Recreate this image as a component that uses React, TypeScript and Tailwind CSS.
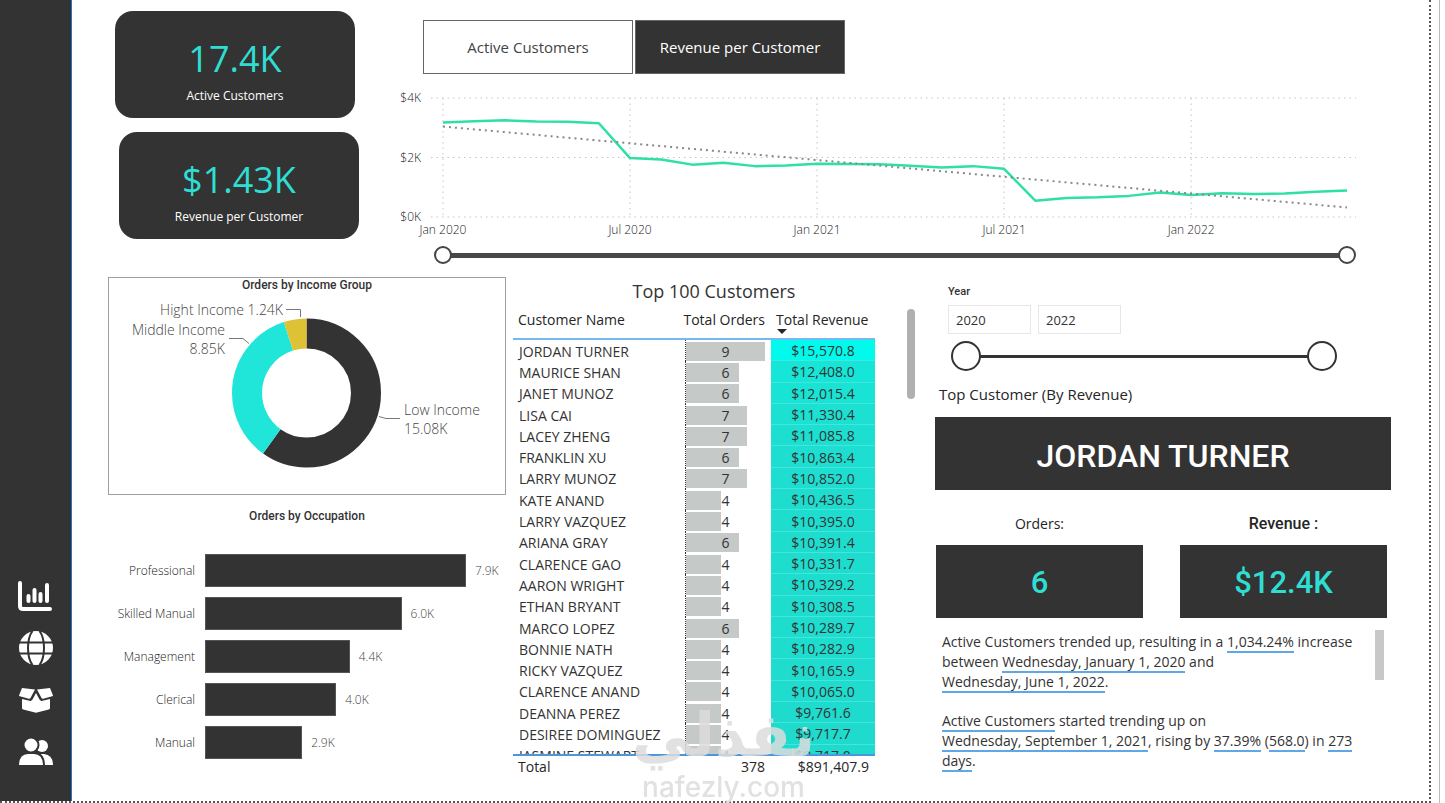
import React, { useState } from 'react';
import clsx from 'clsx';

interface Customer {
  name: string;
  orders: number;
  revenue: string;
  fill: string;
}

const CUSTOMERS: Customer[] = [
  { name: 'JORDAN TURNER', orders: 9, revenue: '$15,570.8', fill: 'bg-[#00fbec]' },
  { name: 'MAURICE SHAN', orders: 6, revenue: '$12,408.0', fill: 'bg-[#16e6d8]' },
  { name: 'JANET MUNOZ', orders: 6, revenue: '$12,015.4', fill: 'bg-[#18e3d5]' },
  { name: 'LISA CAI', orders: 7, revenue: '$11,330.4', fill: 'bg-[#1be0d2]' },
  { name: 'LACEY ZHENG', orders: 7, revenue: '$11,085.8', fill: 'bg-[#1cdfd1]' },
  { name: 'FRANKLIN XU', orders: 6, revenue: '$10,863.4', fill: 'bg-[#1dded0]' },
  { name: 'LARRY MUNOZ', orders: 7, revenue: '$10,852.0', fill: 'bg-[#1dded0]' },
  { name: 'KATE ANAND', orders: 4, revenue: '$10,436.5', fill: 'bg-[#1eddcf]' },
  { name: 'LARRY VAZQUEZ', orders: 4, revenue: '$10,395.0', fill: 'bg-[#1eddcf]' },
  { name: 'ARIANA GRAY', orders: 6, revenue: '$10,391.4', fill: 'bg-[#1eddcf]' },
  { name: 'CLARENCE GAO', orders: 4, revenue: '$10,331.7', fill: 'bg-[#1eddcf]' },
  { name: 'AARON WRIGHT', orders: 4, revenue: '$10,329.2', fill: 'bg-[#1eddcf]' },
  { name: 'ETHAN BRYANT', orders: 4, revenue: '$10,308.5', fill: 'bg-[#1eddcf]' },
  { name: 'MARCO LOPEZ', orders: 6, revenue: '$10,289.7', fill: 'bg-[#1eddcf]' },
  { name: 'BONNIE NATH', orders: 4, revenue: '$10,282.9', fill: 'bg-[#1eddcf]' },
  { name: 'RICKY VAZQUEZ', orders: 4, revenue: '$10,165.9', fill: 'bg-[#1fdccf]' },
  { name: 'CLARENCE ANAND', orders: 4, revenue: '$10,065.0', fill: 'bg-[#1fdccf]' },
  { name: 'DEANNA PEREZ', orders: 4, revenue: '$9,761.6', fill: 'bg-[#1fdbce]' },
  { name: 'DESIREE DOMINGUEZ', orders: 4, revenue: '$9,717.7', fill: 'bg-[#1fdbce]' },
  { name: 'JASMINE STEWART', orders: 4, revenue: '$9,717.0', fill: 'bg-[#1fdbce]' }
];

const MAX_ORDERS = 9;

const OCCUPATIONS = [
  { label: 'Professional', value: 7.9 },
  { label: 'Skilled Manual', value: 5.95 },
  { label: 'Management', value: 4.38 },
  { label: 'Clerical', value: 3.97 },
  { label: 'Manual', value: 2.94 }
];

const OCCUPATION_TEXT = ['7.9K', '6.0K', '4.4K', '4.0K', '2.9K'];

// Revenue per customer by month, in thousands
const REVENUE = [
  3.18, 3.22, 3.25, 3.21, 3.2, 3.15, 1.98, 1.93, 1.76, 1.82, 1.71, 1.73, 1.79, 1.78, 1.77,
  1.72, 1.66, 1.71, 1.62, 0.55, 0.64, 0.66, 0.71, 0.82, 0.74, 0.8, 0.77, 0.79, 0.85, 0.89
];

const INCOME = [
  { label: 'Low Income', value: 15.08, color: '#333333' },
  { label: 'Middle Income', value: 8.85, color: '#20e6da' },
  { label: 'Hight Income', value: 1.24, color: '#dfc135' }
];

/* Sidebar icons */

const ChartIcon = () => (
  <svg viewBox="0 0 36 32" className="h-8 w-9" fill="none" stroke="#fff" strokeLinecap="round">
    <path d="M2 3V26Q2 29 5 29H32" strokeWidth="4" strokeLinejoin="round" />
    <path d="M10.500 16V21M16.500 10V21M22.500 14V21M29 5V21" strokeWidth="4" />
  </svg>
);

const GlobeIcon = () => (
  <svg viewBox="0 0 34 34" className="size-[34px]">
    <circle cx="17" cy="17" r="17" fill="#fff" />
    <g fill="none" stroke="#333" strokeWidth="2">
      <path d="M0 11.500H34M0 22.500H34" />
      <path d="M13.500 0C7.500 8 7.500 26 13.500 34M20.500 0C26.500 8 26.500 26 20.500 34" />
    </g>
  </svg>
);

const BoxIcon = () => (
  <svg viewBox="0 0 34 26" className="h-[26px] w-[34px]" fill="#fff">
    <path d="M3 1L16 2.500L11.500 11Q11 12 9.800 11.700L.8 9.300Q-.3 9 .2 7.900Z" />
    <path d="M31 1L18 2.500L22.500 11Q23 12 24.200 11.700L33.200 9.300Q34.300 9 33.800 7.900Z" />
    <path d="M3 12L10.500 13.800Q12.500 14.200 13.500 12.500L17 6L20.500 12.500Q21.500 14.200 23.500 13.800L31 12V21Q31 22.300 29.800 22.600L18 25.600Q17 25.900 16 25.600L4.200 22.600Q3 22.300 3 21Z" />
  </svg>
);

const UsersIcon = () => (
  <svg viewBox="0 0 34 28" className="h-7 w-[34px]" fill="#fff">
    <circle cx="23" cy="8" r="6" />
    <path d="M20 16H25Q34 17 34 27H20Z" />
    <g stroke="#333" strokeWidth="2">
      <circle cx="12" cy="7" r="7.500" />
      <path d="M-1 28Q-1 15 9 15H15Q25 15 25 28Z" />
    </g>
  </svg>
);

const NAV = [
  { label: 'Overview', Icon: ChartIcon },
  { label: 'Map', Icon: GlobeIcon },
  { label: 'Products', Icon: BoxIcon },
  { label: 'Customers', Icon: UsersIcon }
];

const Sidebar = () => (
  <nav className="flex w-[72px] shrink-0 flex-col items-center justify-end gap-[18px] border-r border-[#2f6fc4] bg-[#333] pb-8">
    {NAV.map(({ label, Icon }) => (
      <a key={label} href={`#${label.toLowerCase()}`} aria-label={label} className="flex h-[34px] items-center">
        <Icon />
      </a>
    ))}
  </nav>
);

/* Range with two handles; the inputs share one track */

interface RangeProps {
  min: number;
  max: number;
  label: string;
  large?: boolean;
}

const Range: React.FC<RangeProps> = ({ min, max, label, large = false }) => {
  const [low, setLow] = useState(min);
  const [high, setHigh] = useState(max);

  const inputClass = clsx(
    'pointer-events-none absolute inset-0 h-full w-full appearance-none bg-transparent',
    '[&::-webkit-slider-thumb]:pointer-events-auto [&::-webkit-slider-thumb]:appearance-none [&::-webkit-slider-thumb]:rounded-full [&::-webkit-slider-thumb]:bg-white',
    large
      ? '[&::-webkit-slider-thumb]:size-[30px] [&::-webkit-slider-thumb]:border-2 [&::-webkit-slider-thumb]:border-[#333]'
      : '[&::-webkit-slider-thumb]:size-[18px] [&::-webkit-slider-thumb]:border-2 [&::-webkit-slider-thumb]:border-[#444]'
  );

  return (
    <div className={clsx('relative flex items-center', large ? 'h-[30px] px-4' : 'h-[18px] px-2')}>
      <div className={clsx('w-full', large ? 'h-[3px] bg-[#333]' : 'h-[5px] bg-[#484848]')} />
      <input
        type="range"
        aria-label={`${label} from`}
        min={min}
        max={max}
        value={low}
        onChange={(e) => setLow(Math.min(Number(e.target.value), high))}
        className={inputClass}
      />
      <input
        type="range"
        aria-label={`${label} to`}
        min={min}
        max={max}
        value={high}
        onChange={(e) => setHigh(Math.max(Number(e.target.value), low))}
        className={inputClass}
      />
    </div>
  );
};

const Kpi: React.FC<{ value: string; label: string; className?: string }> = ({ value, label, className }) => (
  <div
    className={clsx(
      'flex h-[107px] w-60 flex-col items-center rounded-[18px] bg-[#333] pt-6',
      className
    )}
  >
    <span className="text-4xl leading-[48px] text-[#2fded2]">{value}</span>
    <span className="text-xs leading-[26px] text-white">{label}</span>
  </div>
);

/* Line chart */

const LEFT = 43;
const RIGHT = 947;
const BASE = 131;
const toX = (i: number) => LEFT + (i * (RIGHT - LEFT)) / (REVENUE.length - 1);
const toY = (k: number) => BASE - k * 29.75;

const TrendChart = () => {
  const points = REVENUE.map((k, i) => `${toX(i)},${toY(k)}`).join(' ');

  return (
    <svg viewBox="0 0 956 153" className="h-auto w-full" role="img" aria-label="Revenue per customer by month">
      <g stroke="#c4c4c4" strokeWidth="1" strokeDasharray="1.500 4">
        {[0, 2, 4].map((k) => (
          <line key={k} x1="31" x2="956" y1={toY(k)} y2={toY(k)} />
        ))}
        {[0, 6, 12, 18, 24].map((i) => (
          <line key={i} x1={toX(i)} x2={toX(i)} y1="12" y2={BASE} />
        ))}
      </g>
      <g fontSize="12" fontWeight="300" fill="#222">
        {[4, 2, 0].map((k) => (
          <text key={k} x="21" y={toY(k) + 4} textAnchor="end">{`$${k}K`}</text>
        ))}
        {['Jan 2020', 'Jul 2020', 'Jan 2021', 'Jul 2021', 'Jan 2022'].map((label, i) => (
          <text key={label} x={toX(i * 6)} y="148" textAnchor="middle">
            {label}
          </text>
        ))}
      </g>
      <polyline points={points} fill="none" stroke="#2fe0a5" strokeWidth="2.500" strokeLinejoin="round" />
      <line
        x1={toX(0)}
        y1={toY(3.04)}
        x2={RIGHT}
        y2={toY(0.32)}
        stroke="#888"
        strokeWidth="2"
        strokeDasharray="2 4"
      />
    </svg>
  );
};

/* Donut */

const IncomeChart = () => {
  const total = INCOME.reduce((sum, d) => sum + d.value, 0);
  let start = 0;

  return (
    <svg viewBox="0 0 396 200" className="h-auto w-full" role="img" aria-label="Orders by income group">
      <g transform="rotate(-90 197.500 100)" fill="none" strokeWidth="30">
        {INCOME.map((d) => {
          const share = (d.value / total) * 100;
          const offset = -start;
          start += share;
          return (
            <circle
              key={d.label}
              cx="197.500"
              cy="100"
              r="59.500"
              stroke={d.color}
              pathLength="100"
              strokeDasharray={`${share} ${100 - share}`}
              strokeDashoffset={offset}
            />
          );
        })}
      </g>
      <g fill="none" stroke="#777" strokeWidth="1">
        <path d="M177 16.500H191.500V24" />
        <path d="M120 45.500H134L140 50.500" />
        <path d="M270 123.500L277 125.500H291" />
      </g>
      <g fontSize="14" fontWeight="300" fill="#444">
        <text x="174" y="22" textAnchor="end">Hight Income 1.24K</text>
        <text x="116" y="42" textAnchor="end">Middle Income</text>
        <text x="116" y="61" textAnchor="end">8.85K</text>
        <text x="295" y="122">Low Income</text>
        <text x="295" y="141">15.08K</text>
      </g>
    </svg>
  );
};

const OccupationChart = () => (
  <div className="flex flex-col gap-[10px]">
    {OCCUPATIONS.map(({ label, value }, i) => (
      <div key={label} className="flex h-[33px] items-center gap-[10px]">
        <span className="w-[87px] shrink-0 text-right text-xs font-light whitespace-nowrap text-[#222]">{label}</span>
        <div className="flex h-full flex-1 items-center gap-[9px] pr-10">
          <div
            className="h-full shrink-0 border border-[#555] bg-[#333]"
            style={{ width: `${(value / OCCUPATIONS[0].value) * 100}%` }}
          />
          <span className="text-xs font-light text-[#444]">{OCCUPATION_TEXT[i]}</span>
        </div>
      </div>
    ))}
  </div>
);

const CustomerTable = () => (
  <div className="flex items-start justify-between">
    <div className="h-[469px] w-[362px] overflow-y-auto [scrollbar-width:none]">
      <table className="h-[481px] w-full table-fixed border-separate border-spacing-0 text-sm leading-5 text-[#333]">
        <colgroup>
          <col className="w-[172px]" />
          <col className="w-[86px]" />
          <col className="w-[104px]" />
        </colgroup>
        <thead className="sticky top-0 z-10 bg-white text-[#252525]">
          <tr className="h-[31px]">
            <th className="border-b-2 border-[#76b9ee] pt-px pl-[5px] text-left align-top font-normal">Customer Name</th>
            <th className="border-b-2 border-[#76b9ee] pt-px pr-[6px] align-top font-normal">
              <span className="flex justify-end whitespace-nowrap">Total Orders</span>
            </th>
            <th
              className="relative border-b-2 border-[#76b9ee] pt-px pl-[5px] text-left align-top font-normal whitespace-nowrap"
              aria-sort="descending"
            >
              Total Revenue
              <svg viewBox="0 0 10 5" className="absolute top-5 left-[6px] h-[5px] w-[10px]" fill="#252525">
                <path d="M0 0H10L5 5Z" />
              </svg>
            </th>
          </tr>
        </thead>
        <tbody className="leading-[19px]">
          {CUSTOMERS.map((customer) => (
            <tr key={customer.name} className="h-[21px]">
              <td className="p-0 pt-px pl-[6px] whitespace-nowrap">{customer.name}</td>
              <td className="border-l border-dotted border-[#333] p-0 pt-px pr-[6px]">
                <div className="grid items-center text-center">
                  <div
                    className="col-start-1 row-start-1 h-[19px] bg-[#c5c9c8]"
                    style={{ width: `${(customer.orders / MAX_ORDERS) * 100}%` }}
                  />
                  <span className="col-start-1 row-start-1">{customer.orders}</span>
                </div>
              </td>
              <td className={clsx('border-b border-[#42e6db] p-0 pt-px text-center', customer.fill)}>
                {customer.revenue}
              </td>
            </tr>
          ))}
        </tbody>
        <tfoot className="sticky bottom-0 z-10 bg-white text-[#252525]">
          <tr className="h-6">
            <td className="border-t-2 border-[#4a97dc] p-0 pl-[5px]">Total</td>
            <td className="border-t-2 border-[#4a97dc] p-0 pr-[6px] text-right">378</td>
            <td className="border-t-2 border-[#4a97dc] p-0 pr-[6px] text-right">$891,407.9</td>
          </tr>
        </tfoot>
      </table>
    </div>
    <div className="h-[90px] w-2 rounded-full bg-[#b0b0b0]" />
  </div>
);

const Link: React.FC<{ children: React.ReactNode }> = ({ children }) => (
  <a href="#details" className="border-b-2 border-[#5fa8e8] whitespace-nowrap">
    {children}
  </a>
);

const TopCustomer = () => (
  <section className="flex min-w-0 flex-1 flex-col">
    <fieldset className="pr-[54px] pl-[13px]">
      <legend className="pt-[7px] font-[Roboto] text-[11px] leading-4 font-medium text-[#333]">Year</legend>
      <div className="mt-[5px] flex gap-[7px]">
        <input
          aria-label="First year"
          defaultValue="2020"
          className="h-[29px] w-[83px] border border-[#e6e6e6] px-[7px] text-[13px] text-[#333] outline-none"
        />
        <input
          aria-label="Last year"
          defaultValue="2022"
          className="h-[29px] w-[83px] border border-[#e6e6e6] px-[7px] text-[13px] text-[#333] outline-none"
        />
      </div>
      <div className="mt-[7px] ml-[3px]">
        <Range min={2020} max={2022} label="Year" large />
      </div>
    </fieldset>

    <h2 className="mt-[11px] pl-1 text-[15px] leading-6 text-[#252525]">Top Customer (By Revenue)</h2>
    <div className="mt-[11px] flex h-[73px] items-center justify-center bg-[#333] pt-1 font-[Roboto] text-[32px] font-medium text-white">
      JORDAN TURNER
    </div>

    <div className="mt-6 flex gap-[37px] pr-1 pl-px text-center">
      <div className="flex-1">
        <h3 className="text-sm leading-5 text-[#252525]">Orders:</h3>
        <div className="mt-[11px] flex h-[73px] items-center justify-center bg-[#333] pt-1 font-[Roboto] text-[31px] font-medium text-[#2fded2]">
          6
        </div>
      </div>
      <div className="flex-1">
        <h3 className="font-[Roboto] text-base leading-5 font-medium text-[#252525]">Revenue :</h3>
        <div className="mt-[11px] flex h-[73px] items-center justify-center bg-[#333] pt-1 font-[Roboto] text-[31px] font-medium text-[#2fded2]">
          $12.4K
        </div>
      </div>
    </div>

    <div className="mt-3 flex items-start justify-between pr-[7px] pl-[7px] text-sm leading-5 text-[#333]">
      <div className="space-y-[19px] pt-[2px]">
        <p>
          Active Customers trended up, resulting in a <Link>1,034.24%</Link> increase
          <br />
          between <Link>Wednesday, January 1, 2020</Link> and
          <br />
          <Link>Wednesday, June 1, 2022</Link>.
        </p>
        <p>
          <Link>Active Customers</Link> started trending up on
          <br />
          <Link>Wednesday, September 1, 2021</Link>, rising by <Link>37.39%</Link> (<Link>568.0</Link>) in <Link>273</Link>
          <br />
          <Link>days</Link>.
        </p>
      </div>
      <div className="h-[50px] w-[9px] shrink-0 bg-[#c8c8c8]" />
    </div>
  </section>
);

const METRICS = ['Active Customers', 'Revenue per Customer'];

export default function App() {
  const [metric, setMetric] = useState(METRICS[1]);

  return (
    <div className="flex min-h-screen bg-white font-['Open_Sans','Noto_Sans',sans-serif]">
      <div className="relative flex min-w-0 flex-1 border-r-2 border-b-2 border-dotted border-[#555]">
        <Sidebar />

        <main className="min-w-0 flex-1">
          <div className="flex pt-[11px] pr-[73px] pl-[43px]">
            <div className="flex w-[244px] shrink-0 flex-col gap-[14px]">
              <Kpi value="17.4K" label="Active Customers" />
              <Kpi value="$1.43K" label="Revenue per Customer" className="ml-1" />
            </div>

            <div className="ml-[41px] min-w-0 flex-1 pt-[9px]">
              <div className="flex gap-[2px] pl-[23px]">
                {METRICS.map((name) => (
                  <button
                    key={name}
                    type="button"
                    aria-pressed={metric === name}
                    onClick={() => setMetric(name)}
                    className={clsx(
                      'h-[54px] w-[210px] border border-[#666] text-[15px]',
                      metric === name ? 'bg-[#333] font-medium text-white' : 'bg-white text-[#444]'
                    )}
                  >
                    {name}
                  </button>
                ))}
              </div>
              <div className="mt-3">
                <TrendChart />
              </div>
              <div className="mt-[7px] pl-[34px]">
                <Range min={0} max={29} label="Month" />
              </div>
            </div>
          </div>

          <div className="flex pt-[13px] pr-[38px] pl-9">
            <section className="w-[398px] shrink-0">
              <div className="h-[218px] border border-[#9f9f9f]">
                <h2 className="text-center font-[Roboto] text-xs leading-[15px] font-medium text-[#333]">
                  Orders by Income Group
                </h2>
                <IncomeChart />
              </div>
              <h2 className="mt-[14px] mb-[30px] text-center font-[Roboto] text-xs leading-[15px] font-medium text-[#333]">
                Orders by Occupation
              </h2>
              <OccupationChart />
            </section>

            <section className="mr-5 ml-[7px] w-[402px] shrink-0">
              <h2 className="pt-[2px] pb-[6px] text-center text-lg leading-6 text-[#333]">Top 100 Customers</h2>
              <CustomerTable />
            </section>

            <TopCustomer />
          </div>
        </main>

        {/* Watermark */}
        <div className="pointer-events-none absolute bottom-[-2px] left-[637px] z-20 flex w-[173px] flex-col items-center text-[#dcdcdc]/85 select-none">
          <span lang="ar" dir="rtl" className="pb-1 font-['DejaVu_Sans'] text-[60px] leading-[64px] font-bold">
            نفذلي
          </span>
          <span className="font-[Inter] text-[28px] leading-8 font-medium">nafezly.com</span>
        </div>
      </div>
      <div className="w-[14px] shrink-0">
        <div className="ml-[8px] h-full border-l border-[#bbb]" />
      </div>
    </div>
  );
}
